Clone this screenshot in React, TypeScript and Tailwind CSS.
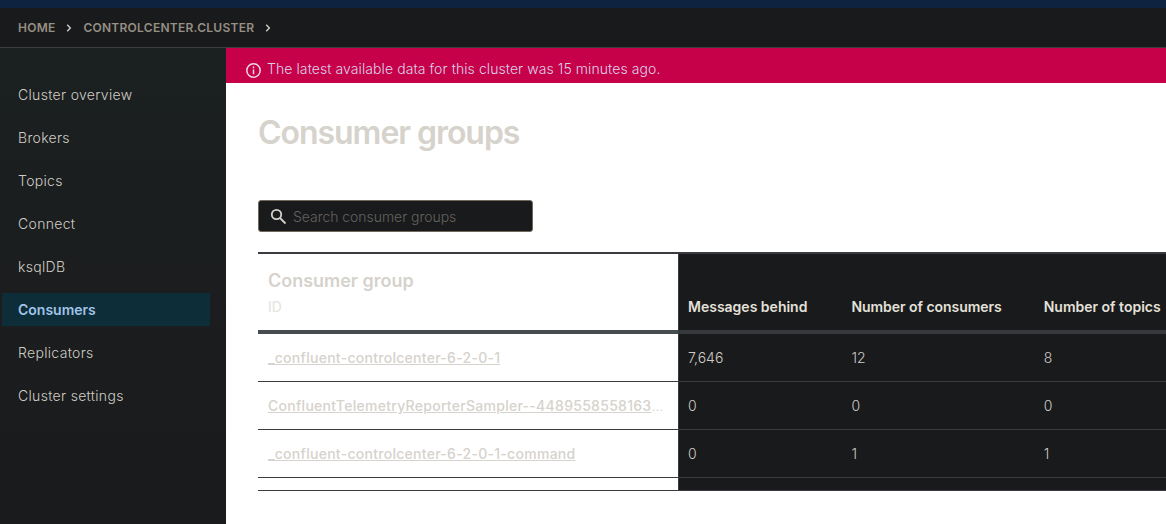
const nav = ["Cluster overview", "Brokers", "Topics", "Connect", "ksqlDB", "Consumers", "Replicators", "Cluster settings"];
const rows = [
  { name: "_confluent-controlcenter-6-2-0-1", behind: "7,646", consumers: "12", topics: "8" },
  { name: "ConfluentTelemetryReporterSampler--4489558558163", clipped: true, behind: "0", consumers: "0", topics: "0" },
  { name: "_confluent-controlcenter-6-2-0-1-command", behind: "0", consumers: "1", topics: "1" },
];

function Chevron() {
  return (
    <svg width="6" height="8" viewBox="0 0 6 8" fill="none" stroke="#d6d2ca" strokeWidth="1.3">
      <path d="M1.2 0.8 4.4 4 1.2 7.2" />
    </svg>
  );
}

export default function App() {
  return (
    <div className="flex h-[524px] w-[1166px] flex-col overflow-hidden bg-white font-['Inter',sans-serif]">
      <div className="h-2 shrink-0 bg-[#0e2340]" />
      <header className="flex h-10 shrink-0 items-center border-b border-[#3b3d40] bg-[#191a1c] pl-[18px] text-xs font-semibold tracking-[0.26px] text-[#968f83]">
        <span className="w-[48px]">HOME</span>
        <Chevron />
        <span className="ml-[11.4px] w-[181.6px]">CONTROLCENTER.CLUSTER</span>
        <Chevron />
      </header>
      <div className="flex min-h-0 flex-1">
        <nav className="flex w-[226px] shrink-0 flex-col gap-[10px] bg-linear-to-b from-[#1b2021] via-[#1b1d1e] to-[#1a1b1c] pt-[30px]">
          {nav.map((n) => (
            <a
              key={n}
              className={
                n === "Consumers"
                  ? "ml-[2px] flex h-[33px] w-[208px] items-center bg-[#0d2d38] pl-4 text-sm font-semibold text-[#a0c4e8]"
                  : "flex h-[33px] items-center pl-[18px] text-sm font-light tracking-[0.32px] text-[#d0ccc5]"
              }
            >
              {n}
            </a>
          ))}
        </nav>
        <main className="flex min-w-0 flex-1 flex-col">
          <div className="flex h-[35px] shrink-0 items-center bg-[#c7004a] pl-5 pt-[7px] text-sm font-light tracking-[0.08px] text-[#d9d3e8]">
            <svg className="mr-[6px] mt-[2px]" width="15" height="15" viewBox="0 0 15 15" fill="none" stroke="#f0dce2" strokeWidth="1.5">
              <circle cx="7.5" cy="7.5" r="6.7" />
              <path d="M7.5 6.5v4.8M7.5 3.6v1.6" />
            </svg>
            The latest available data for this cluster was 15 minutes ago.
          </div>
          <div className="pl-8">
            <h1 className="mt-[30px] h-[39px] text-[32px] leading-10 font-semibold tracking-[-1.04px] text-[#d6d2cc]">Consumer groups</h1>
            <div className="mt-[48px] flex h-8 w-[275px] items-center rounded-[3px] border border-[#716a5c] bg-[#191a1c] pl-[11px] text-sm font-light tracking-[-0.04px] text-[#64625e]">
              <svg className="mr-[6px]" width="17" height="17" viewBox="0 0 17 17" fill="none" stroke="#d6d2ca" strokeWidth="1.8">
                <circle cx="6.5" cy="6.5" r="4.7" />
                <path d="m10 10 5.5 5.5" />
              </svg>
              <span className="pt-[2px]">Search consumer groups</span>
            </div>
            <div className="mt-5 flex h-[239px] w-[908px] flex-col border-t-2 border-b border-[#3a3b3e]">
              <div className="flex h-[80px] shrink-0">
                <div className="w-[420px] border-b-4 border-[#464d51] pl-[10px] pt-[15px]">
                  <div className="text-lg leading-6 font-semibold tracking-[-0.02px] text-[#d6d2cc]">Consumer group</div>
                  <div className="mt-1 text-sm leading-5 font-medium tracking-[-0.1px] text-[#e8e6e3]">ID</div>
                </div>
                <div className="flex flex-1 border-b-4 border-l border-b-[#38393c] border-l-[#3a3b3e] bg-[#191a1c] pt-[43px] text-sm leading-5 font-semibold whitespace-nowrap text-[#e4e1da]">
                  <span className="w-[172.4px] pl-[9px]">Messages behind</span>
                  <span className="w-[192.3px] tracking-[-0.04px]">Number of consumers</span>
                  <span>Number of topics</span>
                </div>
              </div>
              {rows.map((r) => (
                <div key={r.name} className="flex h-12 shrink-0 border-b border-[#3a3b3e] text-sm leading-[47px] whitespace-nowrap">
                  <div className="w-[420px] pl-[10px] font-light tracking-[0.28px] text-[#d6d2cc]">
                    <a className="font-medium underline">{r.name}</a>
                    {r.clipped && "…"}
                  </div>
                  <div className="flex flex-1 border-l border-[#3a3b3e] bg-[#191a1c] font-light text-[#d0ccc5]">
                    <span className="w-[172.4px] pl-[9px]">{r.behind}</span>
                    <span className="w-[192.3px]">{r.consumers}</span>
                    <span>{r.topics}</span>
                  </div>
                </div>
              ))}
              <div className="ml-[420px] flex-1 border-l border-[#3a3b3e] bg-[#191a1c]" />
            </div>
          </div>
        </main>
      </div>
    </div>
  );
}
